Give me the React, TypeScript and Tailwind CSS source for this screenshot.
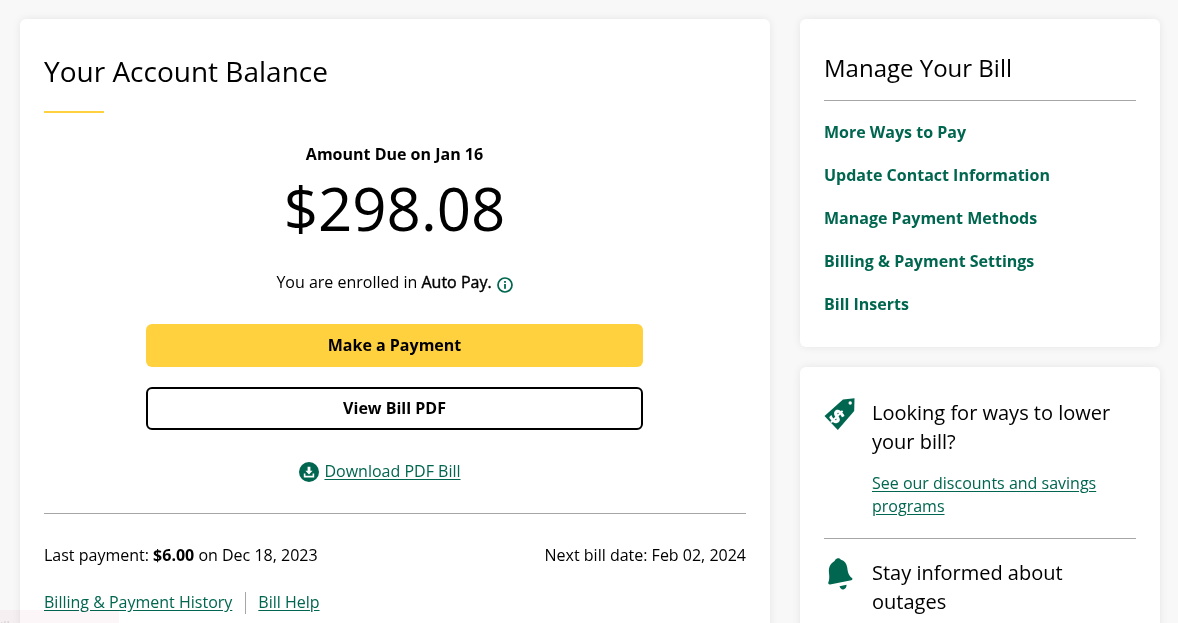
import React from "react";

const GREEN = "#00664f";

function ManageLink({ children }: { children: React.ReactNode }) {
  return <a className="block text-[16px] leading-[24px] font-bold text-[#00664f]">{children}</a>;
}

function TextLink({ children }: { children: React.ReactNode }) {
  return <a className="text-[16px] leading-[23px] text-[#00664f] underline underline-offset-2">{children}</a>;
}

function InfoIcon() {
  return (
    <svg width="16" height="16" viewBox="0 0 16 16" fill="none" className="ml-[5px] mt-[7px] shrink-0">
      <circle cx="8" cy="8" r="7" stroke={GREEN} strokeWidth="1.7" />
      <rect x="7.1" y="7" width="1.8" height="4.8" fill={GREEN} />
      <rect x="7.1" y="4" width="1.8" height="1.8" fill={GREEN} />
    </svg>
  );
}

function DownloadIcon() {
  return (
    <svg width="20" height="20" viewBox="0 0 20 20" className="shrink-0">
      <circle cx="10" cy="10" r="10" fill={GREEN} />
      <path d="M8.6 4.8h2.8v4h2.2L10 12.4 6.4 8.8h2.2z" fill="#fff" />
      <path d="M4.8 11.6h1.6v2.2h7.2v-2.2h1.6v3.8H4.8z" fill="#fff" />
    </svg>
  );
}

function TagIcon() {
  return (
    <svg width="32" height="32" viewBox="0 0 32 32" className="shrink-0">
      <path d="M0.5 18 19 1.500l11.500-1.200-.3 12.700L13.800 32z" fill={GREEN} />
      <circle cx="26.2" cy="5" r="1.700" fill="#fff" />
      <text
        x="15"
        y="27"
        textAnchor="middle"
        fontSize="20"
        fontWeight="800"
        fill="#fff"
        fontFamily="'Open Sans', sans-serif"
        transform="rotate(45 15.500 16.500)"
      >
        $
      </text>
    </svg>
  );
}

function BellIcon() {
  return (
    <svg width="25" height="32" viewBox="0 0 25 32" className="ml-1 shrink-0">
      <path
        d="M9 .5c1.600-.6 3.200 0 4 1.300 3.600 1 5.600 3.800 6.200 7.600.6 4 1 7.600 4.800 10.600.8.800.5 2-.7 2.300L2 26.400c-1.200.2-2-.7-1.700-1.800 1-2.400 1.200-5.800.7-9.600C.4 10 2 5.600 6.600 3.100 7 1.900 7.800.9 9 .5z"
        fill={GREEN}
      />
      <path d="M11.500 28.300l7-1.600c.3 2.200-1 4.200-3 4.700-1.800.4-3.400-1.100-4-3.100z" fill={GREEN} />
    </svg>
  );
}

export default function App() {
  return (
    <div
      className="relative h-screen overflow-hidden bg-[#f8f8f8] text-black"
      style={{ fontFamily: "'Open Sans', sans-serif" }}
    >
      <div className="flex items-start gap-[30px] pl-5 pr-[18px] pt-[19px]">
        {/* Balance card */}
        <section className="w-[750px] shrink-0 rounded-md bg-white px-6 pt-[32px] pb-6 shadow-[0_0_8px_rgba(0,0,0,0.08)]">
          <h1 className="text-[28px] leading-[40px] font-normal">Your Account Balance</h1>
          <div className="mt-[20px] h-[2px] w-[60px] bg-[#ffd13f]" />

          <div className="mt-[29px] flex flex-col items-center pr-px">
            <div className="text-[16px] leading-[24px] font-bold">Amount Due on Jan 16</div>
            <div className="mt-[10px] text-[60px] leading-[64px]">$298.08</div>
            <div className="mt-[30px] flex text-[16px] leading-[24px]">
              <span>
                You are enrolled in <span className="[-webkit-text-stroke:0.4px_black]">Auto Pay.</span>
              </span>
              <InfoIcon />
            </div>
            <button className="mt-[30px] h-[43px] w-[497px] rounded-md bg-[#ffd13f] pb-[2px] text-[16px] font-bold">
              Make a Payment
            </button>
            <button className="mt-5 h-[43px] w-[497px] rounded-md border-2 border-black bg-white pb-[2px] text-[16px] font-bold">
              View Bill PDF
            </button>
            <div className="mt-[30px] mr-[29px] flex items-center gap-[5px]">
              <DownloadIcon />
              <TextLink>Download PDF Bill</TextLink>
            </div>
          </div>

          <div className="mt-[30px] h-px bg-[#a6a6a6]" />

          <div className="mt-[29px] flex justify-between text-[16px] leading-[24px]">
            <div>
              Last payment: <span className="font-bold">$6.00</span> on Dec 18, 2023
            </div>
            <div>Next bill date: Feb 02, 2024</div>
          </div>

          <div className="mt-[24px] flex items-center">
            <TextLink>Billing &amp; Payment History</TextLink>
            <div className="ml-[13px] mr-[12px] h-[22px] w-px bg-[#a6a6a6]" />
            <TextLink>Bill Help</TextLink>
          </div>
        </section>

        {/* Right column */}
        <div className="flex w-[360px] shrink-0 flex-col gap-5">
          <section className="rounded-md bg-white px-6 pt-[31px] pb-[31px] shadow-[0_0_8px_rgba(0,0,0,0.08)]">
            <h2 className="text-[24px] leading-[36px] font-normal">Manage Your Bill</h2>
            <div className="mt-[14px] h-px bg-[#a6a6a6]" />
            <div className="mt-[19px] flex flex-col gap-[19px]">
              <ManageLink>More Ways to Pay</ManageLink>
              <ManageLink>Update Contact Information</ManageLink>
              <ManageLink>Manage Payment Methods</ManageLink>
              <ManageLink>Billing &amp; Payment Settings</ManageLink>
              <ManageLink>Bill Inserts</ManageLink>
            </div>
          </section>

          <section className="rounded-md bg-white px-6 pt-[31px] pb-6 shadow-[0_0_8px_rgba(0,0,0,0.08)]">
            <div className="flex gap-4">
              <TagIcon />
              <div>
                <div className="text-[20px] leading-[29px]">Looking for ways to lower your bill?</div>
                <div className="mt-[16px] leading-[23px]">
                  <TextLink>See our discounts and savings programs</TextLink>
                </div>
              </div>
            </div>
            <div className="mt-[20px] h-px bg-[#a6a6a6]" />
            <div className="mt-[19px] flex gap-[19px]">
              <BellIcon />
              <div className="text-[20px] leading-[29px]">Stay informed about outages</div>
            </div>
          </section>
        </div>
      </div>

      {/* faint overlay peeking in at the bottom left */}
      <div className="absolute bottom-0 left-0 h-[13px] w-[119px] overflow-hidden bg-[#fdf6f8] pt-[8px] text-[13px] leading-[16px] text-[#d8d4d5] mix-blend-multiply">
        ill
      </div>
    </div>
  );
}
